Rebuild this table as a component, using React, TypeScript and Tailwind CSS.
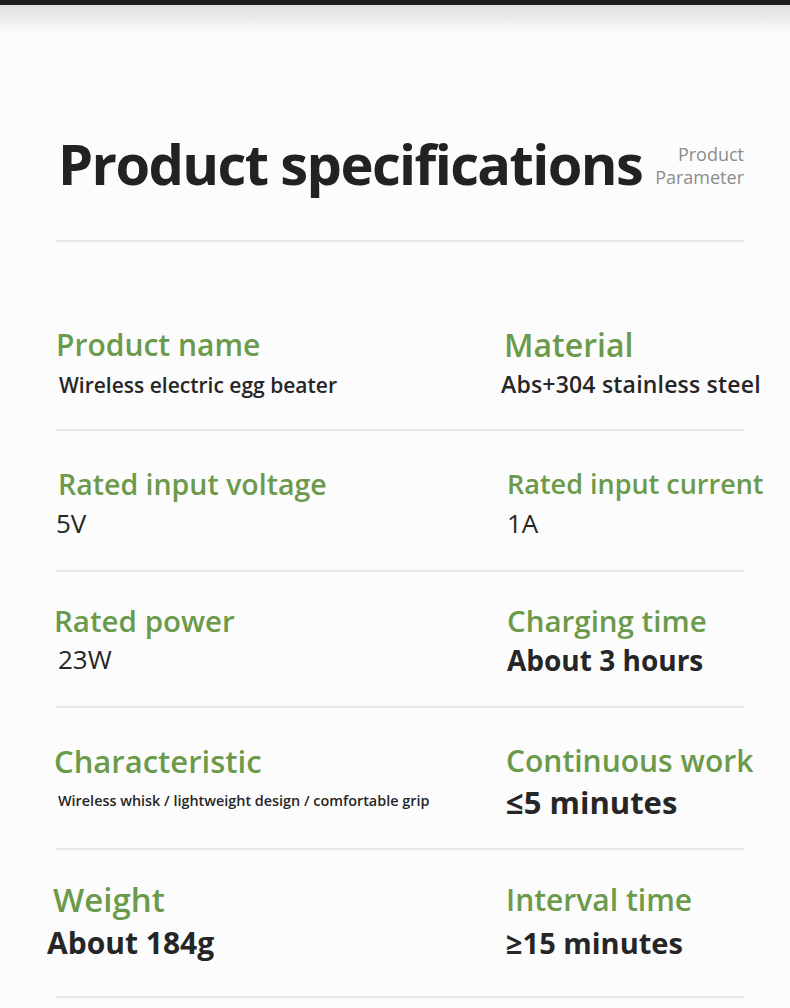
type CellProps = {
  label: string;
  value: string;
  cls: string;
  labelCls: string;
  valueCls: string;
};

function Cell({ label, value, cls, labelCls, valueCls }: CellProps) {
  return (
    <div className={"flex flex-col " + cls}>
      <div className={"whitespace-nowrap text-[#6b9a4b] leading-[40px] " + labelCls}>{label}</div>
      <div className={"whitespace-nowrap text-[#262626] leading-[40px] " + valueCls}>{value}</div>
    </div>
  );
}

function Divider() {
  return <div className="h-[2px] w-[688px] ml-[56px] bg-[#e7e7e7]" />;
}

export default function App() {
  return (
    <div className="min-h-[1008px] w-[790px] bg-[#fcfcfc] font-['Open_Sans',sans-serif] overflow-hidden">
      <div className="h-[5px] bg-[#1c1c1c]" />
      <div className="h-[28px] bg-gradient-to-b from-[#dcdfdc] to-[#fcfcfc]" />

      <div className="flex items-start justify-between pl-[58px] pr-[46px] pt-[98px] h-[207px]">
        <h1 className="text-[56px] font-bold leading-[64px] tracking-[-1.6px] text-[#222222] whitespace-nowrap">
          Product specifications
        </h1>
        <div className="mt-[12px] text-right text-[18px] leading-[23px] text-[#8c8c8c]">
          <div>Product</div>
          <div>Parameter</div>
        </div>
      </div>
      <Divider />

      <div className="grid grid-cols-[504px_1fr] h-[187px] pt-[83px]">
        <Cell cls="pl-[56px]" label="Product name" value="Wireless electric egg beater" labelCls="text-[30px] font-semibold" valueCls="ml-[3px] text-[21px] font-semibold" />
        <Cell cls="pl-[0px]" label="Material" value="Abs+304 stainless steel" labelCls="text-[32px] font-semibold" valueCls="-mt-[1px] -ml-[3px] text-[23px] font-semibold tracking-[0.2px]" />
      </div>
      <Divider />

      <div className="grid grid-cols-[504px_1fr] h-[139px] pt-[33px]">
        <Cell cls="pl-[58px]" label="Rated input voltage" value="5V" labelCls="text-[28.5px] font-semibold" valueCls="-mt-[1px] -ml-[2px] text-[26px] font-normal" />
        <Cell cls="pl-[3px]" label="Rated input current" value="1A" labelCls="text-[27px] font-semibold" valueCls="-mt-[1px] text-[26px] font-normal" />
      </div>
      <Divider />

      <div className="grid grid-cols-[504px_1fr] h-[134px] pt-[29px]">
        <Cell cls="pl-[54px]" label="Rated power" value="23W" labelCls="text-[29.5px] font-semibold" valueCls="-mt-[2px] ml-[4px] text-[26px] font-normal" />
        <Cell cls="pl-[3px]" label="Charging time" value="About 3 hours" labelCls="text-[29.5px] font-semibold" valueCls="-mt-[1px] text-[28px] font-bold" />
      </div>
      <Divider />

      <div className="grid grid-cols-[504px_1fr] h-[140px] pt-[33px]">
        <Cell cls="pl-[54px]" label="Characteristic" value="Wireless whisk / lightweight design / comfortable grip" labelCls="text-[31px] font-semibold" valueCls="ml-[4px] text-[14.4px] font-semibold" />
        <Cell cls="pl-[2px]" label="Continuous work" value="≤5 minutes" labelCls="text-[30px] font-semibold" valueCls="mt-[1px] text-[31px] font-bold" />
      </div>
      <Divider />

      <div className="grid grid-cols-[504px_1fr] h-[146px] pt-[30px]">
        <Cell cls="pl-[53px]" label="Weight" value="About 184g" labelCls="text-[33px] font-semibold" valueCls="mt-[3px] -ml-[6px] text-[30px] font-bold" />
        <Cell cls="pl-[2px]" label="Interval time" value="≥15 minutes" labelCls="text-[30px] font-semibold" valueCls="mt-[3px] text-[29px] font-bold" />
      </div>
      <Divider />
    </div>
  );
}
